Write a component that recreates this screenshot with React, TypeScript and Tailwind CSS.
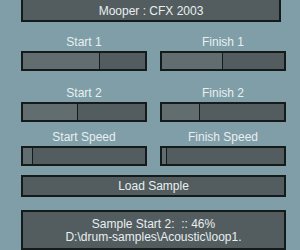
import type { ReactElement } from 'react'

const FONT = { fontFamily: '"Liberation Sans", Arial, sans-serif' }

function Slider({ label, pct }: { label: string; pct: number }): ReactElement {
  return (
    <div className="flex flex-col">
      <div className="h-[14px] text-center text-[12px] leading-[14px] text-[#e8eff1]">{label}</div>
      <div className="mt-[2px] flex h-[20px] border-2 border-[#151a1b] bg-[#535d5f]">
        <div className="h-full border-r border-[#151a1b] bg-[#616d6f]" style={{ width: `${pct}%` }} />
      </div>
    </div>
  )
}

export default function App(): ReactElement {
  return (
    <div
      className="flex h-[250px] w-[300px] flex-col overflow-hidden bg-[#7f9ea7] pl-[21px] pr-[14px] text-[#e8eff1]"
      style={FONT}
    >
      <div className="-mt-[2px] mr-[5px] flex h-[25px] items-center justify-center border-2 border-[#151a1b] bg-[#535d5f] pt-[2px] text-[12px]">
        Mooper : CFX 2003
      </div>

      <div className="mt-[13px] grid grid-cols-[126px_126px] gap-x-[13px]">
        <Slider label="Start 1" pct={63} />
        <Slider label="Finish 1" pct={50} />
      </div>
      <div className="mt-[15px] grid grid-cols-[126px_126px] gap-x-[13px]">
        <Slider label="Start 2" pct={45} />
        <Slider label="Finish 2" pct={31} />
      </div>
      <div className="mt-[8px] grid grid-cols-[126px_126px] gap-x-[13px]">
        <Slider label="Start Speed" pct={8} />
        <Slider label="Finish Speed" pct={4} />
      </div>

      <button
        type="button"
        className="mt-[9px] flex h-[24px] items-center justify-center border-2 border-[#151a1b] bg-[#535d5f] text-[12px] text-[#e8eff1]"
      >
        Load Sample
      </button>

      <div className="mt-[13px] flex h-[50px] flex-col items-center border-2 border-[#151a1b] bg-[#535d5f] pt-[6px] text-[12px] leading-[13px]">
        <div>Sample Start 2:&nbsp;&nbsp;:: 46%</div>
        <div>D:\drum-samples\Acoustic\loop1.</div>
      </div>
    </div>
  )
}
